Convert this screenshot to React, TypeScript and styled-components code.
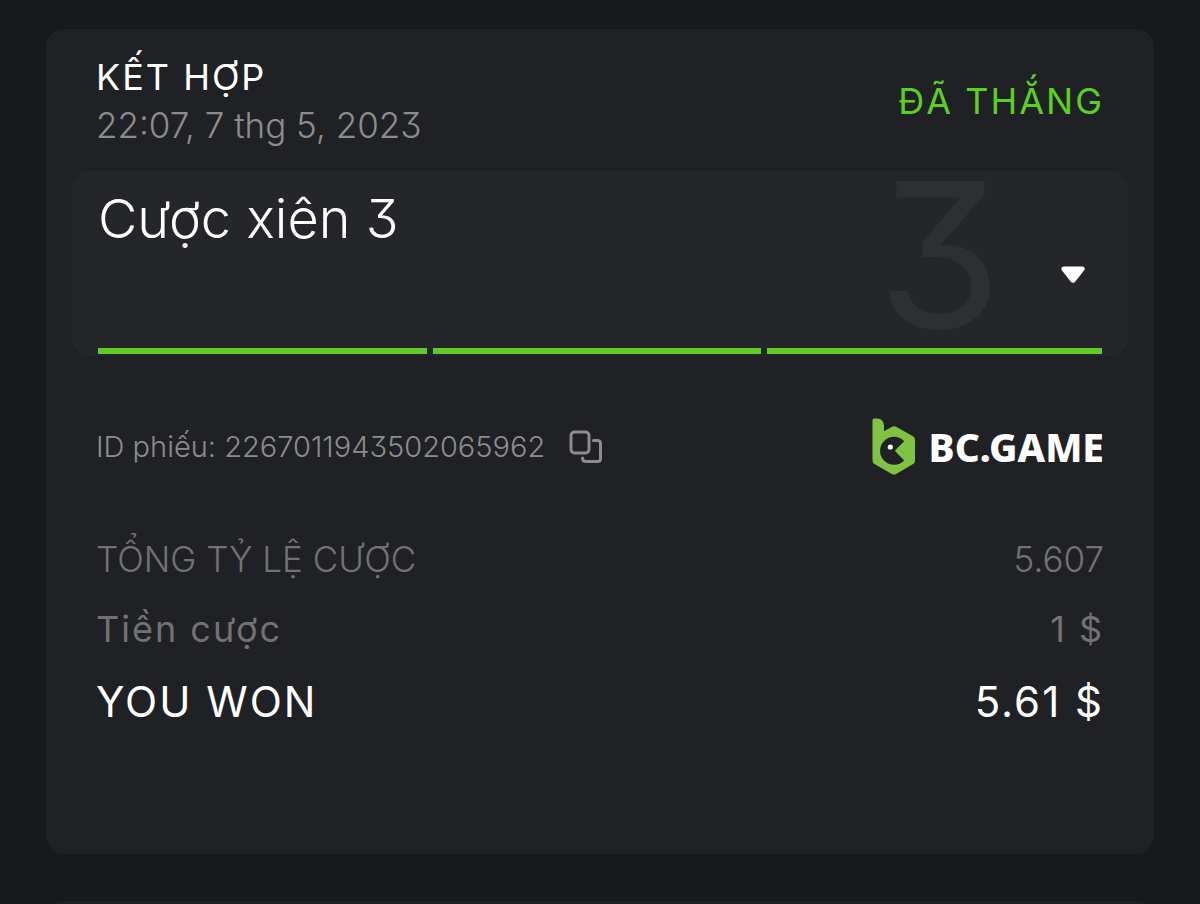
import React from 'react';
import styled, { createGlobalStyle } from 'styled-components';

const GlobalStyle = createGlobalStyle`
  *, *::before, *::after { box-sizing: border-box; }
  body {
    margin: 0;
    background: #18191c;
    color: #ffffff;
    font-family: Inter, "Liberation Sans", sans-serif;
    font-feature-settings: "cv09" 1;
  }
`;

const Page = styled.div`
  display: flex;
  flex-direction: column;
  gap: 47px;
  min-height: 100vh;
  padding: 29px 46px 0;
`;

const Card = styled.article`
  display: flex;
  flex-direction: column;
  padding: 24px 26px 114px;
  border-radius: 18px;
  background: #202124;
`;

const NextSlot = styled.div`
  flex: 1 1 0;
  min-height: 3px;
  height: 0;
  overflow: hidden;
`;

const NextCard = styled.div`
  height: 100vh;
  border-radius: 18px;
  background: #202124;
`;

const Header = styled.header`
  display: flex;
  justify-content: space-between;
  align-items: center;
  padding: 0 24px;
  margin-bottom: 22px;
`;

const Heading = styled.h1`
  margin: 0;
  font-size: 36px;
  line-height: 48px;
  font-weight: 400;
  letter-spacing: 2px;
`;

const PlacedAt = styled.time`
  display: block;
  font-size: 35px;
  line-height: 48px;
  font-weight: 300;
  color: #8c8c8f;
`;

const Status = styled.span`
  font-size: 36px;
  line-height: 48px;
  letter-spacing: 2px;
  color: #5bd01f;
`;

const Panel = styled.section`
  position: relative;
  display: flex;
  flex-direction: column;
  justify-content: space-between;
  height: 185px;
  padding: 16px 26px 2px;
  border-radius: 18px;
  background: #25262a;
`;

const PanelTitle = styled.h2`
  margin: 0;
  font-size: 54px;
  line-height: 64px;
  font-weight: 350;
`;

const Watermark = styled.span`
  position: absolute;
  top: 10px;
  right: 126px;
  font-size: 202px;
  line-height: 148px;
  font-weight: 400;
  color: #2e2f33;
`;

const Toggle = styled.button`
  position: absolute;
  top: 87px;
  right: 35px;
  display: flex;
  padding: 8px;
  border: 0;
  background: none;
  cursor: pointer;
`;

const Legs = styled.div`
  display: grid;
  grid-template-columns: repeat(3, 1fr);
`;

const Leg = styled.span`
  height: 6px;
  border-right: 6px solid #25262a;
  background: #5fcc28;
  &:last-child { border-right: 0; }
`;

const TicketRow = styled.div`
  display: flex;
  justify-content: space-between;
  align-items: center;
  padding: 0 24px;
  margin: 62px 0 48px;
`;

const Ticket = styled.div`
  display: flex;
  align-items: center;
  gap: 24px;
  font-size: 29px;
  line-height: 40px;
  font-weight: 300;
  color: #8c8c8f;
`;

const CopyButton = styled.button`
  display: flex;
  padding: 0;
  border: 0;
  background: none;
  color: inherit;
  cursor: pointer;
`;

const Brand = styled.a`
  display: flex;
  align-items: center;
  gap: 13px;
  color: #ffffff;
  text-decoration: none;
`;

const BrandName = styled.span`
  font-family: "Noto Sans", "Open Sans", sans-serif;
  font-size: 39px;
  line-height: 56px;
  font-weight: 800;
`;

const Totals = styled.dl`
  display: flex;
  flex-direction: column;
  margin: 0;
  padding: 0 24px;
`;

const TotalRow = styled.div<{ $size: number; $tracked?: boolean; $won?: boolean }>`
  display: flex;
  justify-content: space-between;
  font-size: ${(p) => p.$size}px;
  line-height: ${(p) => (p.$won ? 76 : 70)}px;
  font-weight: ${(p) => (p.$tracked ? 400 : 300)};
  letter-spacing: ${(p) => (p.$tracked ? '2px' : 'normal')};
  color: ${(p) => (p.$won ? '#ffffff' : '#727275')};
  dd { margin: 0; }
`;

const ArrowIcon = () => (
  <svg width="24" height="18" viewBox="0 0 24 18" aria-hidden="true">
    <path
      d="M2.8 .5H21.2C23.6 .5 24.4 2.8 23 4.6L14.2 15.8C12.9 17.3 11.1 17.3 9.8 15.8L1 4.6C-.4 2.8 .4 .5 2.8 .5Z"
      fill="#fff"
    />
  </svg>
);

const CopyIcon = () => (
  <svg width="34" height="34" viewBox="0 0 34 34" fill="none" stroke="currentColor" strokeWidth="3" strokeLinecap="round" aria-hidden="true">
    <rect x="2" y="2" width="18" height="21" rx="3.5" />
    <path d="M24.5 10.5H28.5Q31.5 10.5 31.5 13.5V28.5Q31.5 31.5 28.5 31.5H17Q13.5 31.5 13.5 28" />
  </svg>
);

const BrandMark = () => (
  <svg width="44" height="58" viewBox="0 0 44 58" aria-hidden="true">
    <path
      d="M.5 2Q.5 .5 2 .5H5C9.5 .5 12 3.5 12 8V13.2L20 8.7Q22 7.6 24 8.7L41 18.2Q43 19.4 43 21.7V42.5Q43 44.8 41 46L24.2 56Q22 57.2 19.8 56L2.5 46Q.5 44.8 .5 42.5Z"
      fill="#80c342"
    />
    <path
      d="M32.2 23.2A14 14 0 1 0 32.2 42.5L23.5 33.5Q22.8 32.8 23.5 32.1Z"
      fill="#202124"
    />
    <circle cx="18.3" cy="29" r="2.6" fill="#fff" />
  </svg>
);

const totals = [
  { label: 'TỔNG TỶ LỆ CƯỢC', value: '5.607', size: 35 },
  { label: 'Tiền cược', value: '1 $', size: 36, tracked: true },
  { label: 'YOU WON', value: '5.61 $', size: 42, tracked: true, won: true },
];

export default function App() {
  return (
    <>
      <GlobalStyle />
      <Page>
        <Card>
          <Header>
            <div>
              <Heading>KẾT HỢP</Heading>
              <PlacedAt dateTime="2023-05-07T22:07">22:07, 7 thg 5, 2023</PlacedAt>
            </div>
            <Status>ĐÃ THẮNG</Status>
          </Header>
          <Panel>
            <Watermark aria-hidden="true">3</Watermark>
            <PanelTitle>Cược xiên 3</PanelTitle>
            <Toggle type="button" aria-label="Cược xiên 3" aria-expanded={false}>
              <ArrowIcon />
            </Toggle>
            <Legs>
              <Leg />
              <Leg />
              <Leg />
            </Legs>
          </Panel>
          <TicketRow>
            <Ticket>
              <span>ID phiếu: 2267011943502065962</span>
              <CopyButton type="button" aria-label="Copy">
                <CopyIcon />
              </CopyButton>
            </Ticket>
            <Brand href="#">
              <BrandMark />
              <BrandName>BC.GAME</BrandName>
            </Brand>
          </TicketRow>
          <Totals>
            {totals.map((t) => (
              <TotalRow key={t.label} $size={t.size} $tracked={t.tracked} $won={t.won}>
                <dt>{t.label}</dt>
                <dd>{t.value}</dd>
              </TotalRow>
            ))}
          </Totals>
        </Card>
        <NextSlot>
          <NextCard />
        </NextSlot>
      </Page>
    </>
  );
}
